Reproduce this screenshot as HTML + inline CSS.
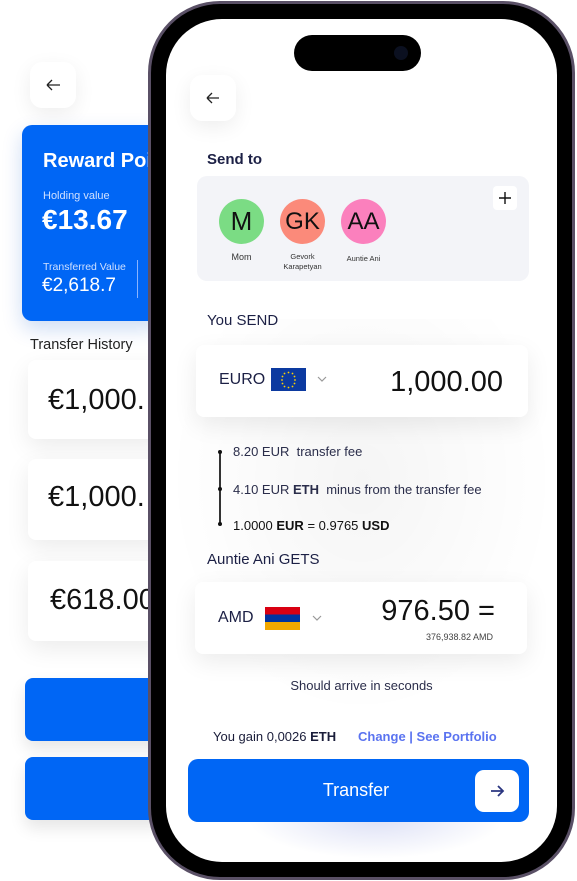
<!DOCTYPE html>
<html><head><meta charset="utf-8"><style>
*{margin:0;padding:0;box-sizing:border-box}
body{width:577px;height:881px;background:#fff;position:relative;overflow:hidden;font-family:"Liberation Sans",sans-serif;color:#1a1d3a}
.abs{position:absolute}
.wcard{position:absolute;background:#fff;border-radius:8px;box-shadow:0 8px 24px rgba(0,0,0,0.08)}
.back{position:absolute;width:46px;height:46px;background:#fff;border-radius:12px;box-shadow:0 6px 20px rgba(0,0,0,0.07)}
.blue{background:#0066f5}
</style></head><body>
<div class="back" style="left:30px;top:62px"><svg width="46" height="46"><path d="M17 23h13M17 23l5-5M17 23l5 5" stroke="#222" stroke-width="1.3" fill="none"/></svg></div>
<div class="abs blue" style="left:22px;top:125px;width:140px;height:196px;border-radius:10px;box-shadow:0 8px 20px rgba(0,80,200,0.2)"></div>
<div class="abs" style="left:43px;top:150px;color:#fff;font-weight:bold;font-size:20px">Reward Points</div>
<div class="abs" style="left:43px;top:190px;color:#cfe0ff;font-size:11px">Holding value</div>
<div class="abs" style="left:42px;top:204px;color:#fff;font-weight:bold;font-size:28px">€13.67</div>
<div class="abs" style="left:43px;top:261px;color:#cfe0ff;font-size:10.5px">Transferred Value</div>
<div class="abs" style="left:42px;top:275px;color:#fff;font-size:19px">€2,618.7</div>
<div class="abs" style="left:137px;top:260px;width:1px;height:38px;background:#8ab4ff"></div>
<div class="abs" style="left:30px;top:337px;font-size:14.5px;color:#222">Transfer History</div>
<div class="wcard" style="left:28px;top:360px;width:140px;height:79px"></div>
<div class="abs" style="left:48px;top:384px;font-size:29px;color:#111">€1,000.</div>
<div class="wcard" style="left:28px;top:459px;width:140px;height:81px"></div>
<div class="abs" style="left:48px;top:481px;font-size:29px;color:#111">€1,000.</div>
<div class="wcard" style="left:28px;top:561px;width:140px;height:80px"></div>
<div class="abs" style="left:50px;top:584px;font-size:29px;color:#111">€618.00</div>
<div class="abs blue" style="left:25px;top:678px;width:140px;height:63px;border-radius:8px;box-shadow:0 8px 16px rgba(0,0,0,0.1)"></div>
<div class="abs blue" style="left:25px;top:757px;width:140px;height:63px;border-radius:8px;box-shadow:0 8px 16px rgba(0,0,0,0.1)"></div>

<div class="abs" style="left:148px;top:1px;width:427px;height:879px;border-radius:72px;background:#000;border:3px solid #5a5066"></div>
<div class="abs" style="left:166px;top:19px;width:391px;height:843px;border-radius:56px;background:#fff;overflow:hidden">
 <div class="abs" style="left:0;top:300px;width:391px;height:400px;background:radial-gradient(ellipse at 50% 40%,rgba(0,0,0,0.04),transparent 70%)"></div>
 <div class="abs" style="left:80px;top:780px;width:260px;height:60px;background:radial-gradient(ellipse at 50% 30%,rgba(60,80,200,0.18),transparent 70%)"></div>
</div>
<div class="abs" style="left:294px;top:35px;width:127px;height:36px;border-radius:18px;background:#000"></div>
<div class="abs" style="left:394px;top:46px;width:14px;height:14px;border-radius:7px;background:#0b1020"></div>

<div class="back" style="left:190px;top:75px"><svg width="46" height="46"><path d="M17 23h12M17 23l5-5M17 23l5 5" stroke="#222" stroke-width="1.3" fill="none"/></svg></div>
<div class="abs" style="left:207px;top:151px;font-weight:bold;font-size:15px;color:#1c2045">Send to</div>
<div class="abs" style="left:197px;top:176px;width:332px;height:105px;border-radius:10px;background:#f3f4f8"></div>
<div class="abs" style="left:493px;top:186px;width:24px;height:24px;border-radius:4px;background:#fff"><svg width="24" height="24"><path d="M12 6v12M6 12h12" stroke="#111" stroke-width="1.4"/></svg></div>
<div class="abs" style="left:219px;top:199px;width:45px;height:45px;border-radius:50%;background:#7bdc84;text-align:center;line-height:45px;font-size:26px;color:#111">M</div>
<div class="abs" style="left:280px;top:199px;width:45px;height:45px;border-radius:50%;background:#fb8a7a;text-align:center;line-height:45px;font-size:24px;color:#111">GK</div>
<div class="abs" style="left:341px;top:199px;width:45px;height:45px;border-radius:50%;background:#fb80bd;text-align:center;line-height:45px;font-size:24px;color:#111">AA</div>
<div class="abs" style="left:219px;top:252px;width:45px;text-align:center;font-size:9px;color:#333">Mom</div>
<div class="abs" style="left:270px;top:252px;width:65px;text-align:center;font-size:7.5px;line-height:10px;color:#333">Gevork<br>Karapetyan</div>
<div class="abs" style="left:333px;top:254px;width:61px;text-align:center;font-size:7.5px;color:#333">Auntie Ani</div>

<div class="abs" style="left:207px;top:312px;font-size:15px;color:#1c2045">You SEND</div>
<div class="wcard" style="left:196px;top:345px;width:332px;height:72px;border-radius:8px"></div>
<div class="abs" style="left:219px;top:371px;font-size:16px;color:#1c2045">EURO</div>
<div class="abs" style="left:271px;top:368px;width:35px;height:23px;background:#0c3aa0"><svg width="35" height="23"><g fill="#ffd400"><circle cx="17.5" cy="4.5" r=".9"/><circle cx="21.5" cy="5.5" r=".9"/><circle cx="23.5" cy="8.5" r=".9"/><circle cx="24" cy="12" r=".9"/><circle cx="23.5" cy="15.5" r=".9"/><circle cx="21.5" cy="18.5" r=".9"/><circle cx="17.5" cy="19.5" r=".9"/><circle cx="13.5" cy="18.5" r=".9"/><circle cx="11.5" cy="15.5" r=".9"/><circle cx="11" cy="12" r=".9"/><circle cx="11.5" cy="8.5" r=".9"/><circle cx="13.5" cy="5.5" r=".9"/></g></svg></div>
<svg class="abs" style="left:316px;top:375px" width="12" height="8"><path d="M2 2l4 4 4-4" stroke="#999" stroke-width="1.2" fill="none"/></svg>
<div class="abs" style="left:340px;top:366px;width:163px;text-align:right;font-size:29px;color:#111">1,000.00</div>

<div class="abs" style="left:219px;top:452px;width:1.5px;height:72px;background:#333"></div>
<div class="abs" style="left:218px;top:450px;width:4px;height:4px;border-radius:2px;background:#111"></div>
<div class="abs" style="left:218px;top:487px;width:4px;height:4px;border-radius:2px;background:#111"></div>
<div class="abs" style="left:218px;top:522px;width:4px;height:4px;border-radius:2px;background:#111"></div>
<div class="abs" style="left:233px;top:444px;font-size:13px;color:#2a2d4a">8.20 EUR&nbsp; transfer fee</div>
<div class="abs" style="left:233px;top:482px;font-size:13px;color:#2a2d4a">4.10 EUR <b>ETH</b>&nbsp; minus from the transfer fee</div>
<div class="abs" style="left:233px;top:518px;font-size:13px;color:#111">1.0000 <b>EUR</b> = 0.9765 <b>USD</b></div>

<div class="abs" style="left:207px;top:551px;font-size:15px;color:#1c2045">Auntie Ani GETS</div>
<div class="wcard" style="left:195px;top:582px;width:332px;height:72px;border-radius:8px"></div>
<div class="abs" style="left:218px;top:609px;font-size:16px;color:#1c2045">AMD</div>
<div class="abs" style="left:265px;top:607px;width:35px;height:23px;background:linear-gradient(#d90012 0 33%,#0033a0 33% 66%,#f2a800 66%)"></div>
<svg class="abs" style="left:311px;top:614px" width="12" height="8"><path d="M2 2l4 4 4-4" stroke="#999" stroke-width="1.2" fill="none"/></svg>
<div class="abs" style="left:340px;top:595px;width:155px;text-align:right;font-size:29px;color:#111">976.50 =</div>
<div class="abs" style="left:380px;top:632px;width:113px;text-align:right;font-size:9px;color:#444">376,938.82 AMD</div>

<div class="abs" style="left:166px;top:678px;width:391px;text-align:center;font-size:13px;color:#2a2d4a">Should arrive in seconds</div>
<div class="abs" style="left:213px;top:729px;font-size:13px;color:#1a1d3a">You gain 0,0026 <b>ETH</b></div>
<div class="abs" style="left:358px;top:729px;font-size:13px;color:#5a73f0;font-weight:bold">Change | See Portfolio</div>

<div class="abs blue" style="left:188px;top:759px;width:341px;height:63px;border-radius:10px"></div>
<div class="abs" style="left:188px;top:780px;width:336px;text-align:center;color:#fff;font-size:18px">Transfer</div>
<div class="abs" style="left:475px;top:770px;width:44px;height:42px;border-radius:9px;background:#fff"><svg width="44" height="42"><path d="M16 21h12M23 16l5 5-5 5" stroke="#2a3580" stroke-width="1.8" fill="none"/></svg></div>
</body></html>
